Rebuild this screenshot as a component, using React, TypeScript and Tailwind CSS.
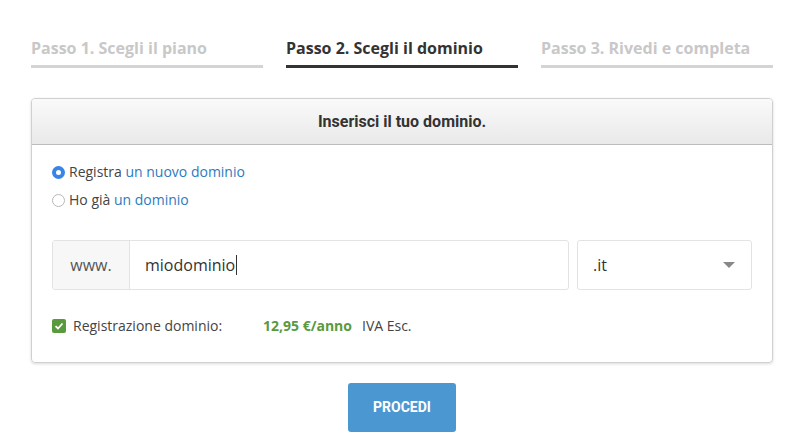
import React from 'react';

const steps = [
	{ label: 'Passo 1. Scegli il piano', active: false },
	{ label: 'Passo 2. Scegli il dominio', active: true },
	{ label: 'Passo 3. Rivedi e completa', active: false },
];

const App: React.FC = () => {
	return (
		<div className="w-[800px] h-[448px] bg-white overflow-hidden font-['Open_Sans',sans-serif] text-[#444]">
			{/* Step tabs */}
			<div className="grid grid-cols-3 gap-[23px] pl-[31px] pr-[27px] pt-[37px]">
				{steps.map(step => (
					<div
						key={step.label}
						className={`pb-[6px] border-b-[3px] text-[16px] leading-[22px] font-bold whitespace-nowrap ${
							step.active ? 'border-[#333] text-[#333]' : 'border-[#d4d4d4] text-[#c8c8c8]'
						}`}
					>
						{step.label}
					</div>
				))}
			</div>

			{/* Domain card */}
			<div className="ml-[31px] mr-[27px] mt-[30px] border border-[#d0d0d0] rounded-[4px] shadow-[0_1px_3px_rgba(0,0,0,0.15)] overflow-hidden">
				<div className="h-[46px] flex items-center justify-center bg-gradient-to-b from-[#fafafa] to-[#e9e9e9] border-b border-[#bcbcbc] font-['Roboto',sans-serif] font-bold text-[16px] text-[#333]">
					Inserisci il tuo dominio.
				</div>

				<div className="px-[20px] pt-[18px] pb-[27px]">
					<div className="flex flex-col gap-[10px] text-[14px] leading-[18px]">
						<label className="flex items-center gap-[4px]">
							<span className="w-[13px] h-[13px] rounded-full bg-[#3a84e6] flex items-center justify-center">
								<span className="w-[5px] h-[5px] rounded-full bg-white" />
							</span>
							<span>
								Registra <span className="text-[#2d7bbd]">un nuovo dominio</span>
							</span>
						</label>
						<label className="flex items-center gap-[4px]">
							<span className="w-[13px] h-[13px] rounded-full border border-[#b8b8b8] bg-white" />
							<span>
								Ho già <span className="text-[#2d7bbd]">un dominio</span>
							</span>
						</label>
					</div>

					<div className="flex gap-[8px] mt-[31px]">
						<div className="flex flex-1 h-[50px] border border-[#e3e3e3] rounded-[3px] overflow-hidden">
							<div className="w-[77px] flex items-center justify-center bg-[#f7f7f7] border-r border-[#e3e3e3] text-[16px] text-[#555]">
								www.
							</div>
							<div className="flex-1 flex items-center pl-[15px] text-[16px] text-[#333]">
								miodominio
								<span className="w-px h-[20px] bg-[#333] ml-px" />
							</div>
						</div>
						<div className="w-[175px] h-[50px] border border-[#e3e3e3] rounded-[3px] flex items-center justify-between pl-[15px] pr-[16px] text-[16px] text-[#333]">
							<span>.it</span>
							<svg width="12" height="6" viewBox="0 0 12 6">
								<path d="M0 0 L12 0 L6 6 Z" fill="#888" />
							</svg>
						</div>
					</div>

					<div className="flex items-center mt-[27px] text-[14px] leading-[18px]">
						<span className="w-[14px] h-[14px] rounded-[2px] bg-[#5a9a3f] flex items-center justify-center">
							<svg width="10" height="10" viewBox="0 0 10 10">
								<path d="M1.5 5.2 L4 7.5 L8.5 2.5" fill="none" stroke="white" strokeWidth="1.8" />
							</svg>
						</span>
						<span className="ml-[7px] w-[190px]">Registrazione dominio:</span>
						<span className="font-bold text-[#5a9a3f]">12,95 €/anno</span>
						<span className="ml-[10px]">IVA Esc.</span>
					</div>
				</div>
			</div>

			<div className="flex justify-center mt-[20px] pl-[4px]">
				<button className="w-[108px] h-[49px] rounded-[3px] bg-[#4b97d2] text-white font-['Roboto',sans-serif] font-bold text-[14px]">
					PROCEDI
				</button>
			</div>
		</div>
	);
};

export default App;
